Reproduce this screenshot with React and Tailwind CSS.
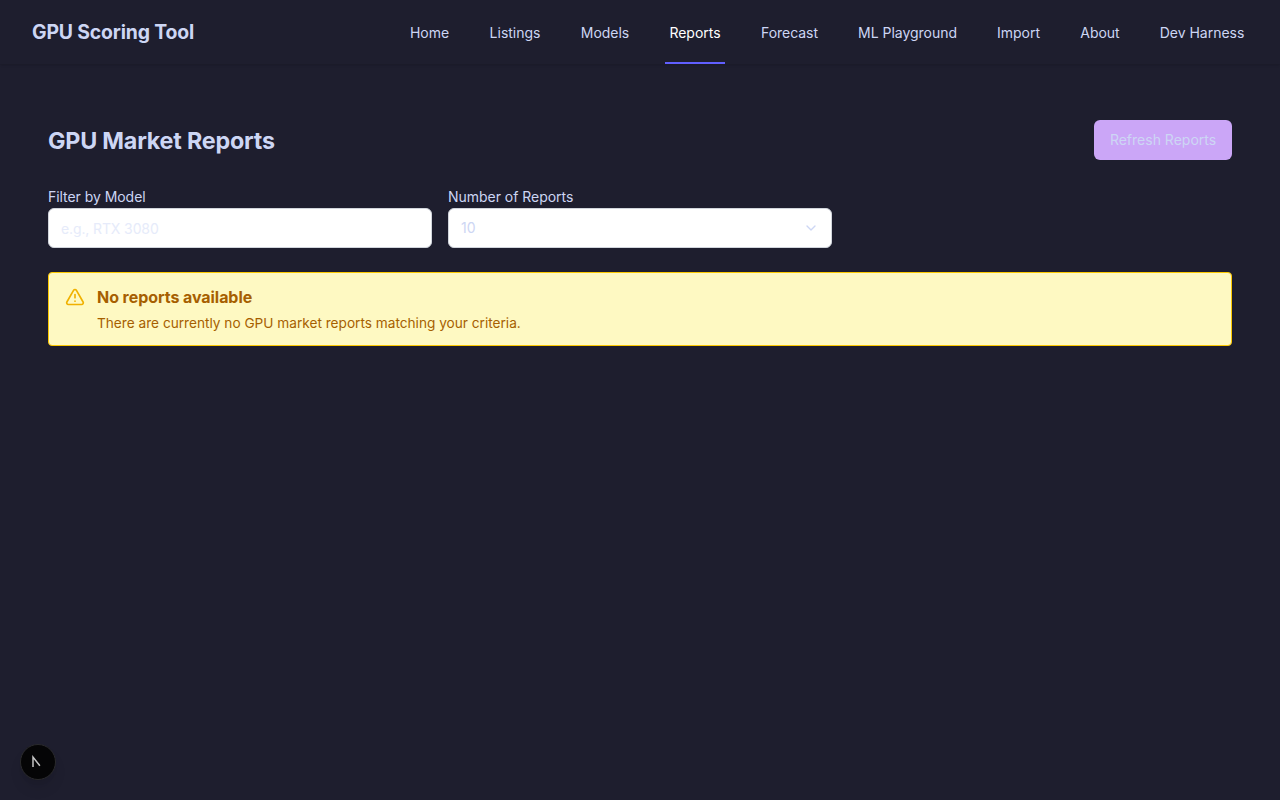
import { ChevronDown, TriangleAlert } from "lucide-react";

const links = [
  { label: "Home", width: "w-[47px]" },
  { label: "Listings", width: "w-[60px]" },
  { label: "Models", width: "w-[56px]" },
  { label: "Reports", width: "w-[60px]", active: true },
  { label: "Forecast", width: "w-[65px]" },
  { label: "ML Playground", width: "w-[107px]" },
  { label: "Import", width: "w-[51px]" },
  { label: "About", width: "w-[48px]" },
  { label: "Dev Harness", width: "w-[92px]" },
];

function Nav() {
  return (
    <nav className="flex h-16 items-center justify-between px-8 shadow-sm">
      <span className="text-[19.4px] leading-7 font-bold tracking-[-0.16px]">GPU Scoring Tool</span>
      <div className="flex h-16 gap-8">
        {links.map((l) => (
          <a
            key={l.label}
            className={`${l.width} flex items-center justify-center whitespace-nowrap border-b-2 pt-1 text-sm tracking-[-0.02px] ${
              l.active ? "border-[#615fff] text-white" : "border-transparent"
            }`}
          >
            {l.label}
          </a>
        ))}
      </div>
    </nav>
  );
}

export default function App() {
  return (
    <div className="relative h-[800px] overflow-hidden bg-[#1e1e2e] font-['Inter',sans-serif] text-[#cdd6f4]">
      <Nav />
      <main className="px-12 pt-14">
        <div className="flex h-10 items-center justify-between">
          <h1 className="pt-0.5 text-[23.3px] leading-8 font-bold tracking-[-0.2px]">GPU Market Reports</h1>
          <button className="flex h-10 w-[138px] items-center justify-center whitespace-nowrap rounded-md bg-[#cba6f7] text-sm">
            Refresh Reports
          </button>
        </div>
        <div className="mt-6 flex gap-4">
          <div className="w-96">
            <label className="block h-6 text-sm leading-[26px] tracking-[-0.05px]">Filter by Model</label>
            <input
              className="block h-10 w-full rounded-md border border-[#d1d5dc] bg-white px-3 text-sm tracking-[-0.12px] placeholder:text-[#e6ebfa]"
              placeholder="e.g., RTX 3080"
            />
          </div>
          <div className="w-96">
            <label className="block h-6 text-sm leading-[26px] tracking-[-0.03px]">Number of Reports</label>
            <div className="flex h-10 items-center justify-between rounded-md border border-[#d1d5dc] bg-white px-3 text-sm">
              <span>10</span>
              <ChevronDown className="size-4" />
            </div>
          </div>
        </div>
        <div className="mt-6 flex gap-3 rounded border border-[#fcc800] bg-[#fef9c2] px-4 py-3 text-[#a65f00]">
          <TriangleAlert className="mt-0.5 size-5 text-[#f0b100]" />
          <div>
            <h2 className="text-base font-bold leading-6 tracking-[-0.06px]">No reports available</h2>
            <p className="mt-1 text-[13.65px] leading-5">
              There are currently no GPU market reports matching your criteria.
            </p>
          </div>
        </div>
      </main>
      <div className="absolute left-5 top-[744px] flex size-9 items-center justify-center rounded-full border border-[#2a2a2c] bg-[#050506] shadow-lg">
        <svg className="size-9" viewBox="0 0 36 36" fill="none">
          <path d="M12.7 23.3V12.8L20 22" stroke="#c4c4c4" strokeWidth="1.6" />
        </svg>
      </div>
    </div>
  );
}
